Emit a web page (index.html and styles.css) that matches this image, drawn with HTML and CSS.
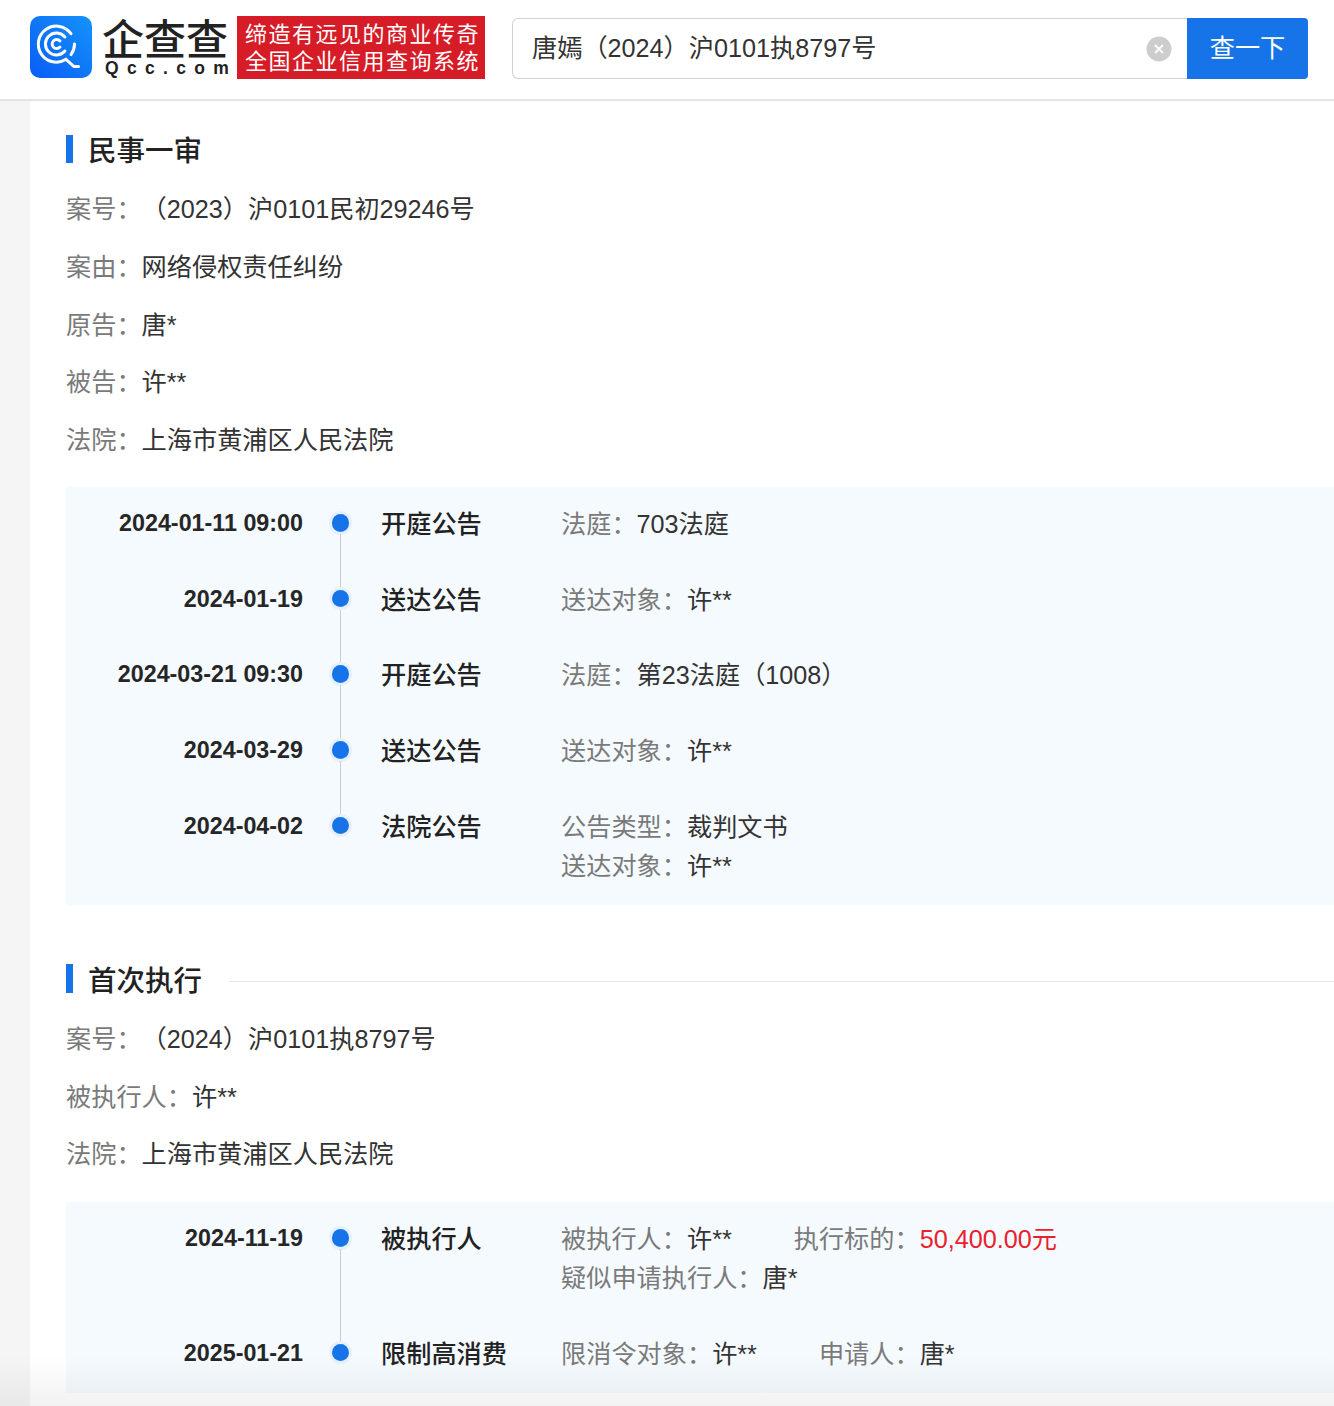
FILE: index.html
```html
<!DOCTYPE html>
<html lang="zh-CN">
<head>
<meta charset="utf-8">
<title>企查查</title>
<link rel="stylesheet" href="styles.css">
</head>
<body>
<header class="topbar">
  <div class="logo-icon">
    <svg width="62" height="62" viewBox="0 0 62 62">
      <defs><linearGradient id="lg" x1="0" y1="1" x2="1" y2="0"><stop offset="0" stop-color="#0a5cf5"/><stop offset="1" stop-color="#1493fb"/></linearGradient></defs>
      <rect width="62" height="62" rx="10" fill="url(#lg)"/>
      <g fill="none" stroke="#fff" stroke-width="3" stroke-linecap="round">
        <path d="M41 17.7 A18 18 0 1 0 36 43.3 L44 50.5 L48.5 50.5"/>
        <path d="M44.5 28 A18 18 0 0 1 41 38.6"/>
        <path d="M34.9 21 A11 11 0 1 0 34.9 35"/>
        <path d="M30 25 A4.5 4.5 0 1 0 30 31"/>
      </g>
    </svg>
  </div>
  <div class="logo-text">
    <div class="logo-cn">企查查</div>
    <div class="logo-en">Qcc.com</div>
  </div>
  <div class="slogan">
    <div>缔造有远见的商业传奇</div>
    <div>全国企业信用查询系统</div>
  </div>
  <div class="search">
    <div class="search-input">
      <span class="query">唐嫣（2024）沪0101执8797号</span>
      <svg class="clear" width="26" height="26" viewBox="0 0 26 26">
        <circle cx="13" cy="13" r="12.5" fill="#cdcdcd"/>
        <path d="M9 9 L17 17 M17 9 L9 17" stroke="#fff" stroke-width="1.8"/>
      </svg>
    </div>
    <div class="search-btn">查一下</div>
  </div>
</header>

<main class="page">
  <div class="content">
    <section class="case first">
      <h2 class="heading"><span>民事一审</span></h2>
      <div class="info"><span class="k">案号：</span>（2023）沪0101民初29246号</div>
      <div class="info"><span class="k">案由：</span>网络侵权责任纠纷</div>
      <div class="info"><span class="k">原告：</span>唐*</div>
      <div class="info"><span class="k">被告：</span>许**</div>
      <div class="info"><span class="k">法院：</span>上海市黄浦区人民法院</div>
      <div class="timeline">
        <div class="row">
          <div class="date">2024-01-11 09:00</div><div class="node"><i></i></div><div class="type">开庭公告</div>
          <div class="detail"><div><span class="k">法庭：</span>703法庭</div></div>
        </div>
        <div class="row">
          <div class="date">2024-01-19</div><div class="node"><i></i></div><div class="type">送达公告</div>
          <div class="detail"><div><span class="k">送达对象：</span>许**</div></div>
        </div>
        <div class="row">
          <div class="date">2024-03-21 09:30</div><div class="node"><i></i></div><div class="type">开庭公告</div>
          <div class="detail"><div><span class="k">法庭：</span>第23法庭（1008）</div></div>
        </div>
        <div class="row">
          <div class="date">2024-03-29</div><div class="node"><i></i></div><div class="type">送达公告</div>
          <div class="detail"><div><span class="k">送达对象：</span>许**</div></div>
        </div>
        <div class="row">
          <div class="date">2024-04-02</div><div class="node"><i></i></div><div class="type">法院公告</div>
          <div class="detail"><div><span class="k">公告类型：</span>裁判文书</div><div><span class="k">送达对象：</span>许**</div></div>
        </div>
      </div>
    </section>

    <section class="case second">
      <h2 class="heading ruled"><span>首次执行</span></h2>
      <div class="info"><span class="k">案号：</span>（2024）沪0101执8797号</div>
      <div class="info"><span class="k">被执行人：</span>许**</div>
      <div class="info"><span class="k">法院：</span>上海市黄浦区人民法院</div>
      <div class="timeline">
        <div class="row">
          <div class="date">2024-11-19</div><div class="node"><i></i></div><div class="type">被执行人</div>
          <div class="detail">
            <div class="pair"><span><span class="k">被执行人：</span>许**</span><span><span class="k">执行标的：</span><em>50,400.00元</em></span></div>
            <div><span class="k">疑似申请执行人：</span>唐*</div>
          </div>
        </div>
        <div class="row">
          <div class="date">2025-01-21</div><div class="node"><i></i></div><div class="type">限制高消费</div>
          <div class="detail"><div class="pair"><span><span class="k">限消令对象：</span>许**</span><span><span class="k">申请人：</span>唐*</span></div></div>
        </div>
      </div>
    </section>
  </div>
</main>
<svg class="watermark" width="1334" height="1406" viewBox="0 0 1334 1406" aria-hidden="true">
  <defs><text id="wm">88MBP9G 88MBP9G 88MBP9G 88MBP9G 88MBP9G 88MBP9G 88MBP9G 88MBP9G 88MBP9G 88MBP9G</text></defs>
  <g transform="translate(843 243) rotate(-50.6)">
    <use href="#wm" x="-1464" y="-772"/>
    <use href="#wm" x="-1489.5" y="-642"/>
    <use href="#wm" x="-1515" y="-512"/>
    <use href="#wm" x="-1540.5" y="-382"/>
    <use href="#wm" x="-1566" y="-252"/>
    <use href="#wm" x="-1591.5" y="-122"/>
    <use href="#wm" x="-1617" y="8"/>
    <use href="#wm" x="-1642.5" y="138"/>
    <use href="#wm" x="-1668" y="268"/>
    <use href="#wm" x="-1693.5" y="398"/>
    <use href="#wm" x="-1719" y="528"/>
    <use href="#wm" x="-1744.5" y="658"/>
    <use href="#wm" x="-1770" y="788"/>
    <use href="#wm" x="-1795.5" y="918"/>
    <use href="#wm" x="-1821" y="1048"/>
    <use href="#wm" x="-1846.5" y="1178"/>
  </g>
</svg>
<div class="fade"></div>
</body>
</html>
```
FILE: styles.css
```css
* { box-sizing: border-box; }
html, body { margin: 0; padding: 0; }
body {
  width: 1334px;
  height: 1406px;
  overflow: hidden;
  position: relative;
  background: #f5f5f5;
  font-family: "Liberation Sans", "Noto Sans CJK SC", sans-serif;
  font-size: 25.2px;
  color: #333;
  text-spacing-trim: space-all;
}
.topbar {
  height: 99px;
  background: #fff;
  display: flex;
  align-items: flex-start;
  padding: 16px 26px 0 30px;
  box-shadow: 0 2px 1px #e4e4e4;
  position: relative;
  z-index: 2;
}
.logo-icon { width: 62px; height: 62px; flex: none; }
.logo-icon svg { display: block; }
.logo-text { width: 126px; margin-left: 10px; flex: none; }
.logo-cn {
  font-family: "Noto Sans CJK SC", sans-serif;
  font-size: 42px;
  line-height: 42px;
  height: 42px;
  font-weight: 500;
  color: #222;
}
.logo-en {
  font-family: "Liberation Sans", sans-serif;
  font-size: 17.5px;
  font-weight: 700;
  line-height: 20px;
  letter-spacing: 8.3px;
  margin: 0 0 0 3px;
  color: #222;
  white-space: nowrap;
}
.slogan {
  width: 248px;
  height: 63px;
  margin-left: 9px;
  flex: none;
  background: #d61c27;
  color: #fff;
  font-family: "Noto Sans CJK SC", sans-serif;
  font-size: 22px;
  line-height: 27px;
  letter-spacing: 1.5px;
  padding: 3px 0 0 8px;
  white-space: nowrap;
}
.search { display: flex; margin: 2px 0 0 27px; height: 61px; }
.search-input {
  width: 675px;
  border: 1px solid #d2d2d2;
  border-right: 0;
  border-radius: 6px 0 0 6px;
  display: flex;
  align-items: center;
  justify-content: space-between;
  padding: 0 15px 0 19px;
  color: #333;
}
.query { line-height: 30px; margin-top: -1px; }
.clear { display: block; }
.search-btn {
  width: 121px;
  background: #1673e8;
  color: #fff;
  border-radius: 0 4px 4px 0;
  text-align: center;
  line-height: 60px;
}
.page { padding-left: 30px; height: 1307px; }
.content { background: #fff; height: 100%; padding-left: 36px; }
.case.first { padding-top: 35.5px; }
.case.second { padding-top: 59.5px; }
.heading {
  margin: 0 0 18px;
  height: 28.5px;
  display: flex;
  align-items: center;
  font-size: 28.5px;
  font-weight: 500;
  font-family: "Noto Sans CJK SC", sans-serif;
  color: #222;
  border-left: 7px solid #1673e8;
  padding-left: 15px;
}
.heading.ruled::after {
  content: "";
  flex: 1;
  height: 1px;
  background: #e6e6e6;
  margin: 6px 0 0 27px;
}
.info { height: 57.75px; line-height: 57.75px; white-space: nowrap; }
.k { color: #7a7a7a; }
.timeline {
  background: #f5faff;
  margin-top: 17.25px;
  padding: 18px 0 19px;
}
.second .timeline { margin-top: 18px; }
.row {
  display: grid;
  grid-template-columns: 237px 78px 180px 1fr;
  line-height: 39px;
  margin-bottom: 36.7px;
}
.row:last-child { margin-bottom: 0; }
.date {
  text-align: right;
  font-weight: 700;
  font-size: 23.3px;
  line-height: 37px;
  color: #262626;
  white-space: nowrap;
}
.node { position: relative; }
.node i {
  position: absolute;
  left: 28.75px;
  top: 9px;
  width: 17.5px;
  height: 17.5px;
  border-radius: 50%;
  background: #1673e8;
  box-shadow: 0 0 0 3px #e6f0ff;
}
.row:not(:last-child) .node::after {
  content: "";
  position: absolute;
  left: 37px;
  top: 29px;
  bottom: -43px;
  width: 1px;
  background: #cccccc;
}
.type { font-weight: 500; color: #222; white-space: nowrap; }
.detail { white-space: nowrap; }
.pair { display: flex; gap: 62px; }
.detail em { font-style: normal; color: #e8212e; }
.watermark {
  position: absolute;
  left: 0;
  top: 0;
  z-index: 3;
  pointer-events: none;
}
.watermark text {
  font-family: "Liberation Mono", monospace;
  font-size: 24px;
  font-weight: 700;
  letter-spacing: 14.475px;
  fill: #000;
  fill-opacity: 0.018;
}
.fade {
  position: absolute;
  left: 0; right: 0; bottom: 0;
  height: 50px;
  z-index: 4;
  background: linear-gradient(to bottom, rgba(0,0,0,0), rgba(0,0,0,0.04) 72%, rgba(0,0,0,0.05));
  pointer-events: none;
}
```
